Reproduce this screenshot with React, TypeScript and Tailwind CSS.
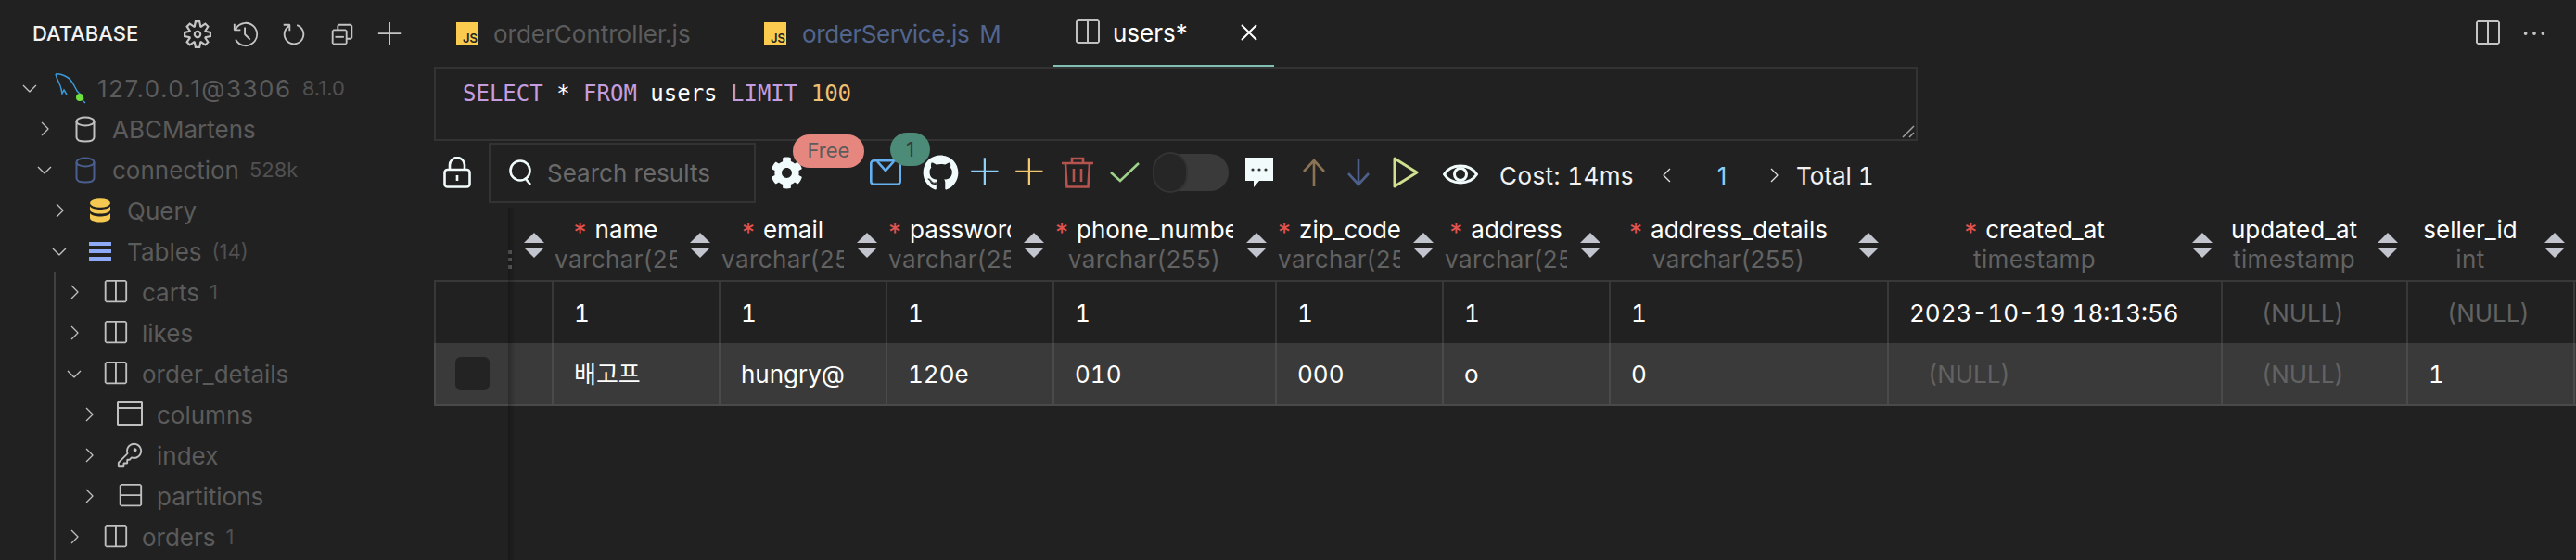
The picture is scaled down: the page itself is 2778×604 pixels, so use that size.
import { FaCog, FaGithub } from "react-icons/fa";
import {
  VscAdd,
  VscBrowser,
  VscChevronDown,
  VscChevronLeft,
  VscChevronRight,
  VscClose,
  VscCollapseAll,
  VscEllipsis,
  VscHistory,
  VscKey,
  VscRefresh,
  VscSettingsGear,
  VscSplitHorizontal,
  VscSplitVertical,
} from "react-icons/vsc";
import type { ReactNode } from "react";

const DbIcon = ({ className }: { className: string }) => (
  <svg width="22" height="29" viewBox="0 0 22 29" fill="none" stroke="currentColor" strokeWidth="2" className={className}>
    <ellipse cx="11" cy="6" rx="9.5" ry="4.5" />
    <path d="M1.5 6v17c0 3 4.5 4.5 9.5 4.5s9.5-1.5 9.5-4.5V6" />
  </svg>
);

const QueryIcon = () => (
  <svg width="24" height="26" viewBox="0 0 24 26" fill="#f5c851">
    <ellipse cx="12" cy="5" rx="11" ry="4.8" />
    <path d="M1 8.5c2 2.6 6.500 3.500 11 3.500s9-.9 11-3.500v3.500c0 2.800-5 4.600-11 4.600S1 14.800 1 12z" />
    <path d="M1 16c2 2.600 6.500 3.500 11 3.500s9-.9 11-3.500v5c0 2.800-5 4.500-11 4.500S1 23.800 1 21z" />
  </svg>
);

const TablesIcon = () => (
  <svg width="24" height="20" viewBox="0 0 24 20" fill="#8ea9f5">
    <rect width="24" height="4" />
    <rect y="8" width="24" height="4" />
    <rect y="16" width="24" height="4" />
  </svg>
);

const Dolphin = () => (
  <svg width="34" height="34" viewBox="0 0 34 34" fill="none" stroke="#3c9ad8" strokeWidth="1.5">
    <path d="M1 2c4-1 8 1 12 3 6 3 8 10 11 15 2 3 6 4 7 9" />
    <path d="M1 2c1 6 5 10 6 16l1 5 2-4 3 5" />
    <circle cx="27" cy="27" r="4" fill="#6fe03c" stroke="none" />
    <path d="M30 30l3 3" />
  </svg>
);

const TableIcon = () => <VscSplitHorizontal size={30} className="text-[#c0c0c0]" />;

type TreeRow = { level: number; open?: boolean; icon: ReactNode; label: string; note?: string };

const treeRows: TreeRow[] = [
  { level: 0, open: true, icon: <Dolphin />, label: "127.0.0.1@3306", note: "8.1.0" },
  { level: 1, icon: <DbIcon className="text-[#c0c0c0]" />, label: "ABCMartens" },
  { level: 1, open: true, icon: <DbIcon className="text-[#4a5f8f]" />, label: "connection", note: "528k" },
  { level: 2, icon: <QueryIcon />, label: "Query" },
  { level: 2, open: true, icon: <TablesIcon />, label: "Tables", note: "(14)" },
  { level: 3, icon: <TableIcon />, label: "carts", note: "1" },
  { level: 3, icon: <TableIcon />, label: "likes" },
  { level: 3, open: true, icon: <TableIcon />, label: "order_details" },
  { level: 4, icon: <VscBrowser size={32} className="text-[#c0c0c0]" />, label: "columns" },
  { level: 4, icon: <VscKey size={30} className="text-[#c0c0c0]" />, label: "index" },
  { level: 4, icon: <VscSplitVertical size={30} className="text-[#c0c0c0]" />, label: "partitions" },
  { level: 3, icon: <TableIcon />, label: "orders", note: "1" },
];

const indentClass = ["pl-[22px]", "pl-[38px]", "pl-[54px]", "pl-[70px]", "pl-[86px]"];

type Column = { name: string; type: string; width: string; textWidth: string; required?: boolean };

const columns: Column[] = [
  { name: "name", type: "varchar(255)", width: "w-[180px]", textWidth: "w-[133px]", required: true },
  { name: "email", type: "varchar(255)", width: "w-[180px]", textWidth: "w-[133px]", required: true },
  { name: "password", type: "varchar(255)", width: "w-[180px]", textWidth: "w-[133px]", required: true },
  { name: "phone_number", type: "varchar(255)", width: "w-[240px]", textWidth: "w-[193px]", required: true },
  { name: "zip_code", type: "varchar(255)", width: "w-[180px]", textWidth: "w-[133px]", required: true },
  { name: "address", type: "varchar(255)", width: "w-[180px]", textWidth: "w-[133px]", required: true },
  { name: "address_details", type: "varchar(255)", width: "w-[300px]", textWidth: "w-[253px]", required: true },
  { name: "created_at", type: "timestamp", width: "w-[360px]", textWidth: "w-[313px]", required: true },
  { name: "updated_at", type: "timestamp", width: "w-[200px]", textWidth: "w-[153px]" },
  { name: "seller_id", type: "int", width: "w-[180px]", textWidth: "w-[133px]" },
];

const rows: (string | null)[][] = [
  ["1", "1", "1", "1", "1", "1", "1", "2023-10-19 18:13:56", null, null],
  ["배고프", "hungry@", "120e", "010", "000", "o", "0", null, null, "1"],
];

const SortArrows = () => (
  <svg width="22" height="27" viewBox="0 0 22 27" fill="#c2c4ce" className="shrink-0">
    <polygon points="11,0 22,11 0,11" />
    <polygon points="0,16 22,16 11,27" />
  </svg>
);

const Toolbar = () => (
  <div className="flex h-[68px] shrink-0 items-center pl-[10px]">
    <svg width="30" height="34" viewBox="0 0 30 34" fill="none" stroke="#f2fbfb" strokeWidth="2.6" className="shrink-0">
      <rect x="1.500" y="14" width="27" height="18.500" rx="3" />
      <path d="M7 14V9a8 8 0 0 1 16 0v5M15 20v6" />
    </svg>
    <div className="ml-[19px] flex h-[65px] w-[288px] shrink-0 items-center border-2 border-[#333333] pl-[20px]">
      <svg width="26" height="28" viewBox="0 0 26 28" fill="none" stroke="#f2fbfb" strokeWidth="2.600" className="shrink-0">
        <circle cx="12" cy="12" r="10.500" />
        <path d="M18 21l5 6" />
      </svg>
      <span className="ml-[15px] text-[#6a6a6a]">Search results</span>
    </div>
    <div className="relative ml-[16px] shrink-0">
      <FaCog size={35} className="text-[#f2fbfb]" />
      <span className="absolute -top-[24px] left-[24px] flex h-[36px] w-[77px] items-center justify-center rounded-full bg-[#e5877f] text-[22px] text-[#5c5c5c]">
        Free
      </span>
    </div>
    <div className="relative ml-[72px] shrink-0">
      <svg width="34" height="28" viewBox="0 0 34 28" fill="none" stroke="#64b0f0" strokeWidth="2.6" className="block">
        <rect x="1.300" y="1.300" width="31.400" height="25.400" rx="3" />
        <path d="M8 2l9 10 9-10" />
      </svg>
      <span className="absolute -top-[29px] left-[22px] flex h-[36px] w-[43px] items-center justify-center rounded-full bg-[#4c8b78] text-[22px] text-[#3a3a3a]">
        1
      </span>
    </div>
    <FaGithub size={39} className="relative ml-[23px] shrink-0 text-[#f2fbfb]" />
    <VscAdd size={36} className="ml-[11px] shrink-0 text-[#8cd0fb]" />
    <VscAdd size={36} className="ml-[12px] shrink-0 text-[#f4c76c]" />
    <svg width="34" height="34" viewBox="0 0 34 34" fill="none" stroke="#b5534f" strokeWidth="2.600" className="ml-[16px] shrink-0">
      <path d="M0 7h34M11 7V2h12v5M4 7l1.500 25.500h23L30 7M13 13v14M21 13v14" />
    </svg>
    <svg width="32" height="22" viewBox="0 0 32 22" fill="none" stroke="#9fd18b" strokeWidth="2.600" className="ml-[18px] shrink-0">
      <path d="M1 11l10 9L31 1" />
    </svg>
    <div className="ml-[16px] flex h-[40px] w-[80px] shrink-0 rounded-full bg-[#3a3a3a]">
      <div className="h-[40px] w-[34px] rounded-full bg-[#262626] ring-2 ring-[#333333]" />
    </div>
    <svg width="30" height="32" viewBox="0 0 30 32" className="ml-[18px] shrink-0">
      <path d="M0 0h30v25H15l-6 7v-7H0z" fill="#f2fbfb" />
      <circle cx="8" cy="13" r="1.600" fill="#333" />
      <circle cx="15" cy="13" r="1.600" fill="#333" />
      <circle cx="22" cy="13" r="1.600" fill="#333" />
    </svg>
    <svg width="24" height="30" viewBox="0 0 24 30" fill="none" stroke="#8a7355" strokeWidth="2.600" className="ml-[32px] shrink-0">
      <path d="M12 30V2M1 14L12 2l11 12" />
    </svg>
    <svg width="24" height="30" viewBox="0 0 24 30" fill="none" stroke="#4d5f8a" strokeWidth="2.600" className="ml-[24px] shrink-0">
      <path d="M12 0v28M1 16l11 12 11-12" />
    </svg>
    <svg width="28" height="34" viewBox="0 0 28 34" fill="none" stroke="#cfe08e" strokeWidth="3" strokeLinejoin="round" className="ml-[25px] shrink-0">
      <path d="M2 2l24 15L2 32z" />
    </svg>
    <svg width="38" height="28" viewBox="0 0 38 28" fill="none" stroke="#f2fbfb" strokeWidth="3" className="ml-[26px] mt-[4px] shrink-0">
      <path d="M1.500 14C9 2 29 2 36.500 14 29 26 9 26 1.500 14z" />
      <circle cx="19" cy="14" r="6.500" />
    </svg>
    <span className="ml-[23px] mt-[6px] w-[169px] shrink-0 tabular-nums tracking-[0.4px] text-[#f2f2f2]">Cost: 14ms</span>
    <VscChevronLeft size={24} className="mt-[6px] shrink-0 text-[#e0e0e0]" />
    <span className="ml-[32px] mt-[6px] w-[30px] shrink-0 text-center text-[#8cd0fb]">1</span>
    <VscChevronRight size={24} className="ml-[29px] mt-[6px] shrink-0 text-[#e0e0e0]" />
    <span className="ml-[12px] mt-[6px] shrink-0 tabular-nums text-[#f2f2f2]">Total 1</span>
  </div>
);

const ResultTable = () => (
  <div className="relative flex flex-col">
    <div className="flex h-[82px] pt-[6px]">
      <div className="flex w-[129px] shrink-0 items-center justify-end pr-[10px]">
        <svg width="4" height="20" viewBox="0 0 4 20" fill="#5e5e5e" className="mr-[13px] mt-[32px]">
          <rect width="4" height="4" />
          <rect y="8" width="4" height="4" />
          <rect y="16" width="4" height="4" />
        </svg>
        <SortArrows />
      </div>
      {columns.map((col) => (
        <div key={col.name} className={`flex shrink-0 items-center ${col.width}`}>
          <div className={`overflow-hidden whitespace-nowrap pl-px text-center leading-[32px] ${col.textWidth}`}>
            <div className="text-white">
              {col.required && (
                <span className="mr-[9px] inline-block translate-y-[4px] text-[28px] leading-none text-[#e0534f]">*</span>
              )}
              {col.name}
            </div>
            <div className="tracking-[0.4px] text-[#626262]">{col.type}</div>
          </div>
          <div className="ml-[14px]">
            <SortArrows />
          </div>
        </div>
      ))}
    </div>
    {rows.map((row, r) => (
      <div
        key={r}
        className={
          r === 0
            ? "flex h-[68px] border-t-2 border-[#383838] bg-[#212121]"
            : "flex h-[68px] border-b-2 border-[#4a4a4a] bg-[#3a3a3a]"
        }
      >
        <div className={`flex w-[129px] shrink-0 items-center border-x-2 pl-[21px] ${r === 0 ? "border-[#383838]" : "border-[#4a4a4a]"}`}>
          {r === 1 && <div className="h-[36px] w-[37px] rounded-md bg-[#232323]" />}
        </div>
        {row.map((cell, c) => (
          <div
            key={c}
            className={`flex shrink-0 items-center border-r-2 tabular-nums ${columns[c].width} ${r === 0 ? "border-[#383838]" : "border-[#4a4a4a]"} ${cell === null ? "pl-[42px] text-[#626262]" : "pl-[22px] text-white"}`}
          >
            {cell === null ? "(NULL)" : cell}
          </div>
        ))}
      </div>
    ))}
    <div className="absolute bottom-[-170px] left-[80px] top-[4px] w-[8px] bg-gradient-to-r from-black/25 to-transparent" />
  </div>
);

const App = () => {
  return (
    <div className="flex h-[604px] w-[2778px] overflow-hidden bg-[#212121] font-['Inter','Noto_Sans_CJK_KR',sans-serif] text-[26px]">
      <aside className="w-[468px] shrink-0">
        <div className="flex h-[73px] items-center pl-[35px]">
          <span className="w-[163px] text-[22px] font-medium text-[#f2f2f2]">DATABASE</span>
          <div className="flex items-center gap-[22px] text-[#c5c5c5]">
            <VscSettingsGear size={30} />
            <VscHistory size={30} />
            <VscRefresh size={30} />
            <VscCollapseAll size={30} />
            <VscAdd size={30} />
          </div>
        </div>
        <div className="relative">
          <div className="absolute bottom-[-40px] left-[58px] top-[220px] w-[2px] bg-[#404040]" />
          {treeRows.map((row) => (
            <div key={row.label} className={`flex h-[44px] items-center whitespace-nowrap ${indentClass[row.level]}`}>
              <span className="flex w-[20px] shrink-0 justify-center text-[#c0c0c0]">
                {row.open ? <VscChevronDown size={24} className="shrink-0" /> : <VscChevronRight size={24} className="shrink-0" />}
              </span>
              <span className="ml-[20px] flex w-[28px] shrink-0 justify-center">
                <span className="flex shrink-0 items-center justify-center">{row.icon}</span>
              </span>
              <span className={`ml-[15px] text-[#5b5b5b] ${row.level === 0 ? "tracking-[1.5px]" : ""}`}>{row.label}</span>
              {row.note && <span className="ml-[11px] text-[22px] text-[#505050]">{row.note}</span>}
            </div>
          ))}
        </div>
      </aside>
      <main className="flex min-w-0 flex-1 flex-col">
        <div className="flex h-[72px] shrink-0 items-center">
          <div className="flex h-full w-[332px] items-center pl-[24px]">
            <JsBadge />
            <span className="ml-[16px] text-[#5c5c5c]">orderController.js</span>
          </div>
          <div className="flex h-full w-[336px] items-center pl-[24px]">
            <JsBadge />
            <span className="ml-[17px] tracking-[-0.4px] text-[#51658f]">orderService.js</span>
            <span className="ml-[11px] text-[#51658f]">M</span>
          </div>
          <div className="flex h-full w-[238px] items-center border-b-2 border-[#80c0b4] pl-[20px]">
            <VscSplitHorizontal size={32} className="text-[#c0c0c0]" />
            <span className="ml-[12px] text-white">users*</span>
            <VscClose size={32} className="ml-[50px] text-white" />
          </div>
          <div className="ml-auto flex items-center gap-[20px] pr-[30px] text-[#c5c5c5]">
            <VscSplitHorizontal size={32} />
            <VscEllipsis size={30} />
          </div>
        </div>
        <div className="relative h-[80px] w-[1600px] shrink-0 border-2 border-[#333333] pl-[29px] pt-[11px] font-['DejaVu_Sans_Mono',monospace] text-[24px] leading-[32px]">
          <span className="text-[#c39ddf]">SELECT</span>
          <span className="text-white"> * </span>
          <span className="text-[#c39ddf]">FROM</span>
          <span className="text-white"> users </span>
          <span className="text-[#c39ddf]">LIMIT</span>
          <span className="text-[#f0c070]"> 100</span>
          <svg width="14" height="14" viewBox="0 0 14 14" stroke="#a0a0a0" strokeWidth="1.500" className="absolute bottom-[1px] right-[1px]">
            <path d="M1 13L13 1M8 13l5-5" />
          </svg>
        </div>
        <Toolbar />
        <ResultTable />
      </main>
    </div>
  );
};

const JsBadge = () => (
  <div className="flex h-[24px] w-[24px] shrink-0 items-end justify-end bg-[#fbcb4f] pr-[1px] text-[13px] font-semibold leading-[14px] text-[#222222]">
    JS
  </div>
);

export default App;
